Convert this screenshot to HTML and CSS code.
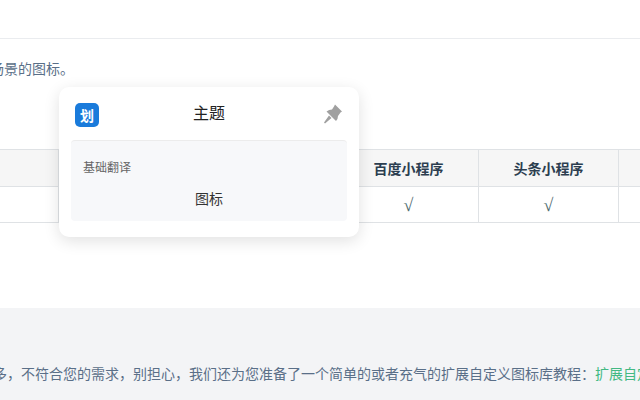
FILE: index.html
```html
<!DOCTYPE html>
<html lang="zh-CN">
<head>
<meta charset="utf-8">
<title>图标</title>
<link rel="stylesheet" href="styles.css">
</head>
<body>
<div class="page">
  <div class="topbar"></div>
  <p class="intro">满足大多数场景的图标。</p>
  <table class="grid">
    <thead>
      <tr><th>App</th><th>H5</th><th>微信小程序</th><th>支付宝小程序</th><th>百度小程序</th><th>头条小程序</th><th>QQ小程序</th></tr>
    </thead>
    <tbody>
      <tr><td>√</td><td>√</td><td>√</td><td>√</td><td>√</td><td>√</td><td>√</td></tr>
    </tbody>
  </table>
  <div class="note">
    <p class="note-text">图标太多，不符合您的需求，别担心，我们还为您准备了一个简单的或者充气的扩展自定义图标库教程：<span class="link">扩展自定义图标库</span></p>
  </div>
</div>
<div class="popup">
  <div class="popup-head">
    <div class="logo">划</div>
    <div class="popup-title">主题</div>
    <svg class="pin" viewBox="0 0 20 20" width="20" height="20"><path fill="#a0a0a0" d="M13 0.500L20 7.500L18.500 8.500L16 12Q16 15 14 17L4.500 7.500Q7 5.500 10 5.500L12 2.500ZM7 11.500L9.500 14L3 19.500L2 18.500Z"/></svg>
  </div>
  <div class="panel">
    <div class="panel-label">基础翻译</div>
    <div class="panel-item">图标</div>
  </div>
</div>
</body>
</html>
```
FILE: styles.css
```css
* { box-sizing: border-box; }
html, body { margin: 0; padding: 0; width: 640px; height: 400px; overflow: hidden; background: #fff; }
body { position: relative; font-family: "Noto Sans CJK SC", "Liberation Sans", sans-serif; font-size: 14px; color: #2c3e50; }
.page { width: 640px; height: 400px; overflow: hidden; display: flex; flex-direction: column; }
.topbar { height: 39px; flex: none; border-bottom: 1px solid #eaecef; }
.intro { margin: 19px 0 0 -80px; height: 20px; line-height: 20px; white-space: nowrap; color: #5a6f88; flex: none; }
.grid { flex: none; margin: 71px 0 0 -222px; width: 980px; table-layout: fixed; border-collapse: collapse; }
.grid th, .grid td { width: 140px; border: 1px solid #dfe2e5; text-align: center; padding: 0; white-space: nowrap; }
.grid th { height: 37px; background: #f6f6f6; font-weight: 700; font-size: 14px; color: #2c3e50; }
.grid td { height: 36px; color: #4f6b70; font-family: "Liberation Serif", serif; font-size: 18px; line-height: 20px; }
.note { flex: 1; margin-top: 85px; background: #f3f4f6; padding-top: 55px; }
.note-text { margin: 0 0 0 -49px; height: 20px; line-height: 20px; white-space: nowrap; color: #5a6f88; }
.link { color: #42b983; }
.popup { position: absolute; left: 59px; top: 87px; width: 300px; height: 150px; padding: 0 12px; background: #fff; border-radius: 10px; box-shadow: 0 4px 16px rgba(0,0,0,.12); }
.popup-head { height: 53px; padding: 16px 4px 0; display: grid; grid-template-columns: 1fr auto 1fr; align-items: start; }
.logo { width: 24px; height: 24px; border-radius: 5px; background: #1a7bdb; color: #fff; font-size: 14px; font-weight: 700; line-height: 24px; text-align: center; }
.popup-title { font-size: 16px; line-height: 22px; margin-top: -2px; color: #222; }
.pin { display: block; justify-self: end; margin-top: 1px; margin-right: 1px; }
.panel { height: 81px; background: #f7f8fa; border-top: 1px solid #ececec; border-radius: 4px; padding: 17px 0 0; }
.panel-label { margin-left: 12px; font-size: 12px; line-height: 18px; color: #666; }
.panel-item { margin-top: 12px; font-size: 14px; line-height: 20px; text-align: center; color: #333; }
```
